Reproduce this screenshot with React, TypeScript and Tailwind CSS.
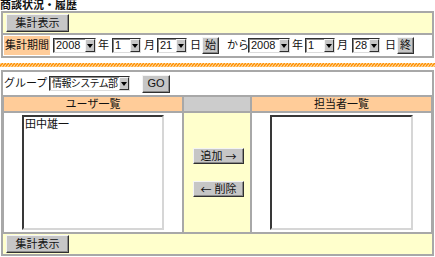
import React from "react";

const FONT = "font-['Liberation_Sans','Noto_Sans_CJK_JP',sans-serif]";

function Btn({ className, children }: { className: string; children: React.ReactNode }) {
  return (
    <div
      className={`flex items-center justify-center border border-t-[#f4f4f4] border-l-[#f4f4f4] border-b-[#303030] border-r-[#303030] bg-[#c6c6c6] shadow-[inset_-1px_-1px_0_#8a8a8a] leading-none ${className}`}
    >
      {children}
    </div>
  );
}

function Sel({ className, value, textClass = "" }: { className: string; value: string; textClass?: string }) {
  return (
    <div
      className={`flex border border-t-[#303030] border-l-[#303030] border-b-[#dcdcdc] border-r-[#dcdcdc] bg-white shadow-[inset_1px_1px_0_#8a8a8a] ${className}`}
    >
      <span className={`flex-1 overflow-hidden whitespace-nowrap pl-[2px] pt-[1px] leading-[11px] ${textClass}`}>{value}</span>
      <span className="flex w-[10px] items-center justify-center border border-t-[#f4f4f4] border-l-[#f4f4f4] border-b-[#303030] border-r-[#303030] bg-[#c6c6c6]">
        <svg width="6" height="4" viewBox="0 0 6 4">
          <path d="M0 0h6L3 4z" fill="#000" />
        </svg>
      </span>
    </div>
  );
}

function Listbox({ children }: { children?: React.ReactNode }) {
  return (
    <div className="h-[115px] border-2 border-t-[#383838] border-l-[#383838] border-b-[#d6d6d6] border-r-[#d6d6d6] bg-white pl-[1px] pt-[1px] leading-[12px]">
      {children}
    </div>
  );
}

export default function App() {
  return (
    <div className={`h-[257px] w-[435px] overflow-hidden bg-white text-[11px] text-[#111] ${FONT}`}>
      <div className="h-[11px] text-[11px] font-semibold leading-[10px]">商談状況・履歴</div>

      {/* 検索条件 */}
      <div className="ml-[1px] flex w-[433px] flex-col gap-[2px] bg-[#a8a8a8] px-[2px] py-[2px]">
        <div className="flex h-[20px] items-center bg-[#ffffcc] pl-[3px]">
          <Btn className="h-[18px] w-[63px]">集計表示</Btn>
        </div>
        <div className="flex h-[21px] items-center bg-white pl-[1px]">
          <div className="flex h-[19px] w-[46px] items-center justify-center bg-[#ffcc99]">集計期間</div>
          <Sel className="ml-[3px] h-[15px] w-[43px]" value="2008" />
          <span className="ml-[2px] w-[11px]">年</span>
          <Sel className="ml-[3px] h-[15px] w-[29px]" value="1" />
          <span className="ml-[3px] w-[11px]">月</span>
          <Sel className="ml-[2px] h-[15px] w-[30px]" value="21" />
          <span className="ml-[3px] w-[11px]">日</span>
          <Btn className="ml-[1px] h-[17px] w-[17px]">始</Btn>
          <span className="ml-[8px] w-[20px] whitespace-nowrap">から</span>
          <Sel className="ml-[1px] h-[15px] w-[42px]" value="2008" />
          <span className="ml-[2px] w-[11px]">年</span>
          <Sel className="ml-[2px] h-[15px] w-[30px]" value="1" />
          <span className="ml-[2px] w-[11px]">月</span>
          <Sel className="ml-[4px] h-[15px] w-[28px]" value="28" />
          <span className="ml-[5px] w-[11px]">日</span>
          <Btn className="ml-[1px] h-[17px] w-[17px]">終</Btn>
        </div>
      </div>

      <svg className="mt-[5px] block" width="435" height="4">
        <defs>
          <pattern id="hatch" width="3" height="4" patternUnits="userSpaceOnUse">
            <rect width="3" height="4" fill="#ffd8a0" />
            <path d="M-1 4L3 0M2 5L5 2" stroke="#ff9000" strokeWidth="1.4" />
          </pattern>
        </defs>
        <rect width="435" height="4" fill="url(#hatch)" />
      </svg>

      {/* 担当者選択 */}
      <div className="ml-[1px] mt-[3px] flex w-[433px] flex-col gap-[2px] bg-[#a8a8a8] px-[2px] py-[2px]">
        <div className="flex h-[23px] items-center bg-white pl-[1px]">
          <span className="w-[43px] whitespace-nowrap">グループ</span>
          <Sel className="ml-[2px] h-[15px] w-[81px]" value="情報システム部" textClass="text-[10px] tracking-[-0.6px]" />
          <Btn className="ml-[12px] h-[18px] w-[28px]">GO</Btn>
        </div>
        <div className="flex h-[14px] gap-[2px] pl-[1px]">
          <div className="flex w-[178px] items-center justify-center bg-[#ffcc99] leading-none">ユーザ一覧</div>
          <div className="w-[66px] bg-[#cccccc]" />
          <div className="flex w-[179px] items-center justify-center bg-[#ffcc99] leading-none">担当者一覧</div>
        </div>
        <div className="flex h-[119px] gap-[2px] pl-[1px]">
          <div className="w-[178px] bg-white px-[18px] pt-[2px]">
            <Listbox>田中雄一</Listbox>
          </div>
          <div className="flex w-[66px] flex-col items-center justify-center gap-[17px] bg-[#ffffcc] pl-[3px]">
            <Btn className="h-[16px] w-[51px]">
              追加<span className="ml-[3px] font-['Noto_Sans_CJK_JP',sans-serif]">→</span>
            </Btn>
            <Btn className="h-[16px] w-[51px]">
              <span className="mr-[3px] font-['Noto_Sans_CJK_JP',sans-serif]">←</span>削除
            </Btn>
          </div>
          <div className="w-[179px] bg-white px-[18px] pt-[2px]">
            <Listbox />
          </div>
        </div>
        <div className="flex h-[20px] items-center bg-[#ffffcc] pl-[3px]">
          <Btn className="h-[18px] w-[63px]">集計表示</Btn>
        </div>
      </div>
    </div>
  );
}
